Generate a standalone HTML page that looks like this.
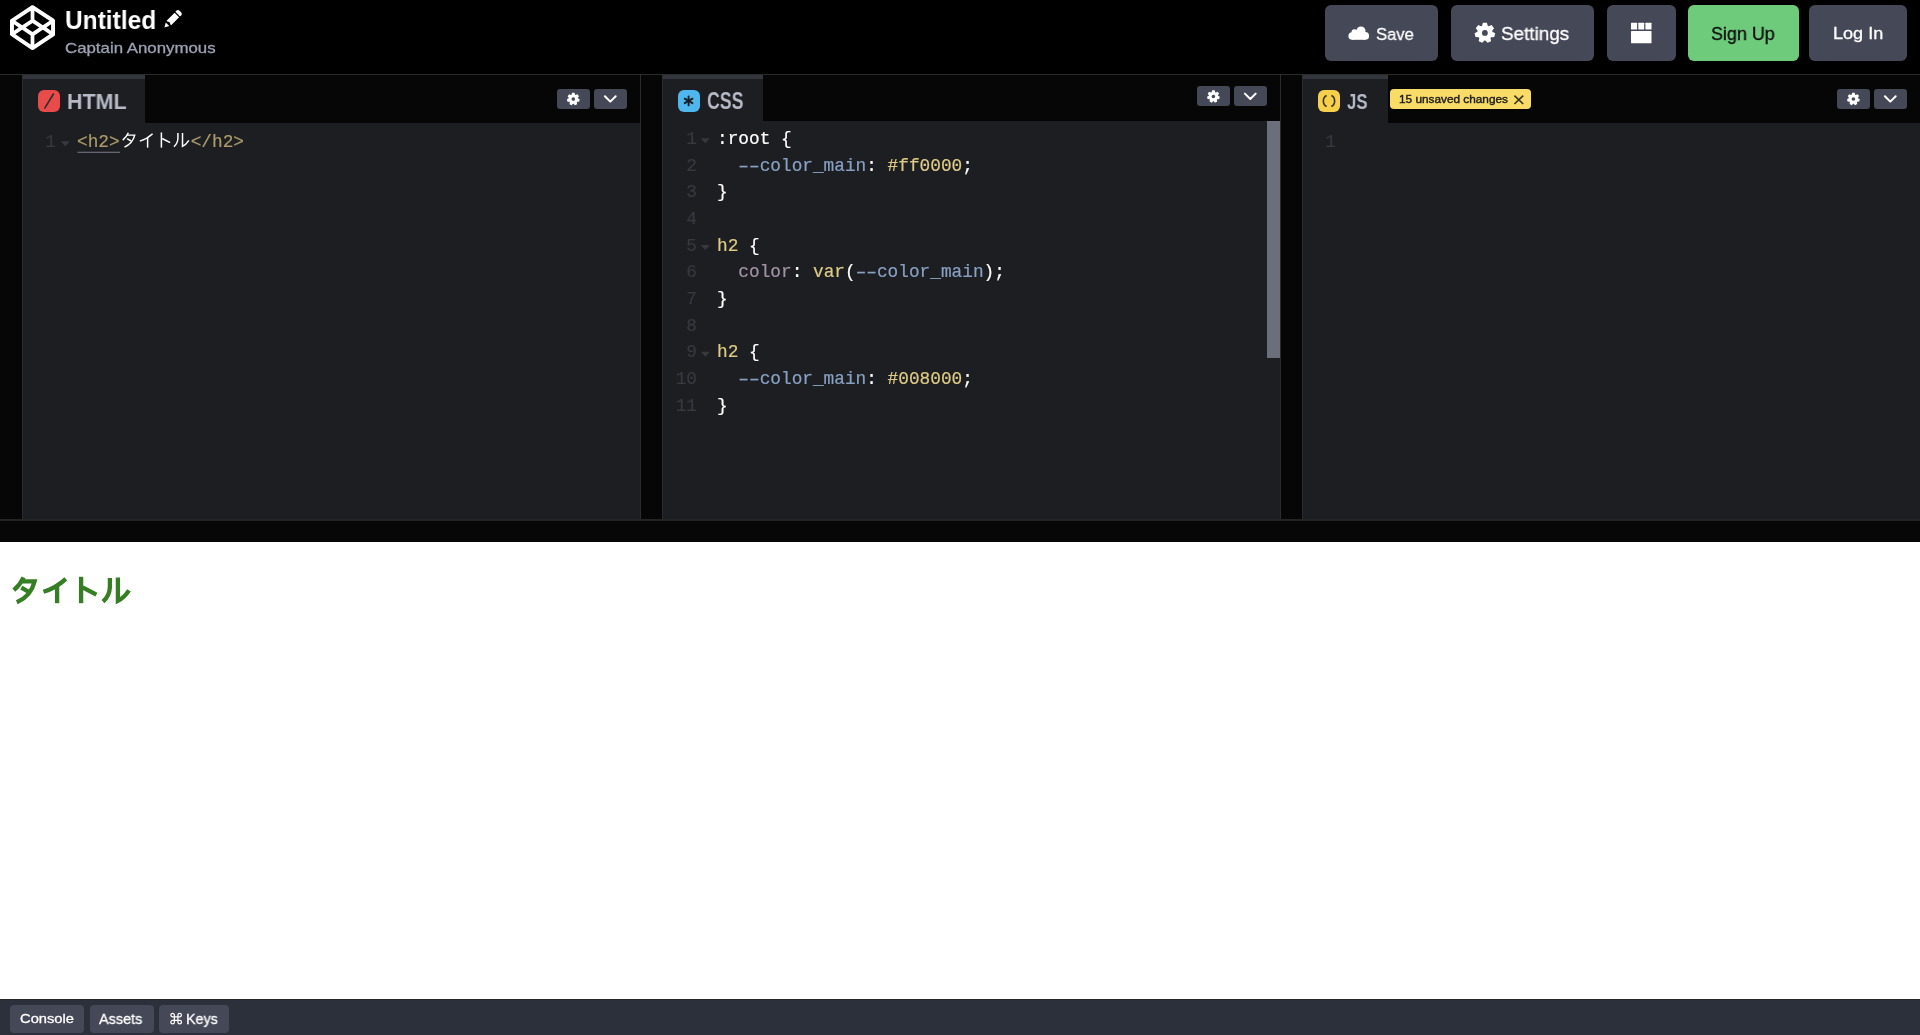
<!DOCTYPE html>
<html><head><meta charset="utf-8">
<style>
*{margin:0;padding:0;box-sizing:border-box}
html,body{width:1920px;height:1035px;overflow:hidden;background:#fff;font-family:"Liberation Sans",sans-serif}
.a{position:absolute}
.t{position:absolute;white-space:nowrap;transform-origin:0 0;will-change:transform}
#hdr{left:0;top:0;width:1920px;height:74px;background:#000}
#hdrb{left:0;top:74px;width:1920px;height:1px;background:#2a2a2a}
.btn{position:absolute;top:5px;height:56px;border-radius:6px;background:#444857}
.res{position:absolute;top:75px;height:444px;background:#060606}
.pan{position:absolute;top:75px;height:445px;background:#1d1e22;border-left:1px solid #2c2c2c;border-right:1px solid #2c2c2c;border-bottom:1px solid #2c2c2c}
.tabbar{position:absolute;left:0;top:0;right:0;height:48px;background:#060606}
.tab{position:absolute;left:0;top:0;height:48px;background:#1d1e22;border-top:4px solid #34363e}
.ico{position:absolute;top:15px;width:22px;height:22px;border-radius:6px}
.sbtn{position:absolute;height:20px;width:33px;border-radius:3px;background:#444857}
.mono{will-change:transform;-webkit-text-stroke:0.2px currentColor;font-family:"Liberation Mono",monospace;font-size:17.78px;line-height:26.67px}
.ln{position:absolute;color:#37393f;text-align:right}
.fold{position:absolute;width:0;height:0;border-left:4.5px solid transparent;border-right:4.5px solid transparent;border-top:5px solid #3b3e47}
#ftr{left:0;top:999px;width:1920px;height:36px;background:#2c303a;border-top:1px solid #26272c}
.fbtn{position:absolute;top:5px;height:28px;border-radius:4px;background:#444857}
</style></head><body>
<!-- header -->
<div id="hdr" class="a"></div>
<div id="hdrb" class="a"></div>
<svg class="a" style="left:10px;top:5px" width="45" height="45" viewBox="0 0 24 24"><path fill="#fff" d="M24 8.2l-.1-.2-.1-.1v-.1l-.1-.1v-.1l-.1-.1L12.6.3c-.4-.3-.8-.3-1.2 0L.4 7.6l-.1.1-.1.1-.1.1v.1l-.1.1V15.9l.1.1.1.1v.1l.1.1.1.1L11.4 23.9c.2.1.4.2.6.2s.4-.1.6-.2l11-7.3.1-.1.1-.1v-.1l.1-.1v-.1l.1-.1V8.2zM13 3l8.1 5.4-3.6 2.4-4.5-3V3zm-2 0v4.8l-4.5 3-3.6-2.4L11 3zM2.1 10.3L4.6 12l-2.5 1.7v-3.4zM11 21l-8.1-5.4 3.6-2.4 4.5 3V21zm1-6.6L8.4 12 12 9.6l3.6 2.4-3.6 2.4zm1 6.6v-4.8l4.5-3 3.6 2.4L13 21zm8.9-7.3L19.4 12l2.5-1.7v3.4z"/></svg>

<div class="btn" style="left:1325px;width:113px"></div>
<div class="btn" style="left:1451px;width:143px"></div>
<div class="btn" style="left:1607px;width:69px"></div>
<div class="btn" style="left:1688px;width:111px;background:#6ecb7b"></div>
<div class="btn" style="left:1809px;width:98px"></div>

<!-- editors -->
<div class="res" style="left:0;width:22px"></div>
<div class="res" style="left:641px;width:21px"></div>
<div class="res" style="left:1281px;width:21px"></div>

<div class="pan" style="left:22px;width:619px">
  <div class="tabbar"></div>
  <div class="tab" style="width:122px"></div>
  <div class="ico" style="left:15px;background:#e74c4b"></div>
  <div class="sbtn" style="left:534px;top:14px"></div>
  <div class="sbtn" style="left:571px;top:14px"></div>
</div>
<div class="pan" style="left:662px;width:619px">
  <div class="tabbar" style="height:46px"></div>
  <div class="tab" style="width:100px;height:46px"></div>
  <div class="ico" style="left:15px;background:#4fb6ee"></div>
  <div class="sbtn" style="left:534px;top:11px"></div>
  <div class="sbtn" style="left:571px;top:11px"></div>
  <div class="a" style="left:604px;top:46px;width:13px;height:237px;background:#6b6e7b"></div>
</div>
<div class="pan" style="left:1302px;width:618px;border-right:0">
  <div class="tabbar"></div>
  <div class="tab" style="width:85px"></div>
  <div class="ico" style="left:15px;background:#f6d04d"></div>
  <div class="a" style="left:87px;top:14px;width:141px;height:20px;border-radius:4px;background:#f9dc68"></div>
  <div class="sbtn" style="left:534px;top:14px"></div>
  <div class="sbtn" style="left:571px;top:14px"></div>
</div>

<div class="a" style="left:0;top:519px;width:1920px;height:2px;background:#242424"></div>
<div class="a" style="left:0;top:521px;width:1920px;height:21px;background:#070707"></div>

<!-- footer -->
<div id="ftr" class="a">
  <div class="fbtn" style="left:10px;width:74px"></div>
  <div class="fbtn" style="left:90px;width:64px"></div>
  <div class="fbtn" style="left:159px;width:70px"></div>
</div>

<!-- icons -->
<svg class="a" style="left:0;top:0;overflow:visible" width="1920" height="1035">
 <defs><path id="gear" d="M-2.83 -7.05 L-1.99 -10.11 L1.99 -10.11 L2.83 -7.05 L3.75 -6.61 L6.66 -7.86 L9.14 -4.75 L7.28 -2.19 L7.51 -1.19 L10.30 0.31 L9.41 4.19 L6.25 4.33 L5.61 5.13 L6.18 8.24 L2.59 9.97 L0.51 7.58 L-0.51 7.58 L-2.59 9.97 L-6.18 8.24 L-5.61 5.13 L-6.25 4.33 L-9.41 4.19 L-10.30 0.31 L-7.51 -1.19 L-7.28 -2.19 L-9.14 -4.75 L-6.66 -7.86 L-3.75 -6.61 Z M2.90 0.00 A2.9 2.9 0 1 0 -2.90 0.00 A2.9 2.9 0 1 0 2.90 0.00 Z" fill-rule="evenodd"/></defs>
 <!-- pencil -->
 <g transform="translate(164.4 27.4) rotate(-45)" fill="#fff">
  <polygon points="0,0 4.4,-2.5 4.4,2.5"/>
  <polygon points="6.0,-3.2 17.6,-3.2 17.6,3.2 6.0,3.2 7.4,0"/>
  <path d="M18.8 -3.3 H20.6 A1.9 3.3 0 0 1 20.6 3.3 H18.8 Z"/>
 </g>
 <!-- cloud -->
 <g fill="#fff">
  <circle cx="1360.9" cy="31.0" r="4.6"/>
  <circle cx="1354.4" cy="32.2" r="2.9"/>
  <circle cx="1352.2" cy="36.0" r="3.8"/>
  <circle cx="1365.3" cy="35.9" r="3.8"/>
  <rect x="1352.2" y="33" width="13.1" height="6.8"/>
 </g>
 <!-- header gear -->
 <use href="#gear" transform="translate(1484.9 32.9)" fill="#fff"/>
 <!-- grid -->
 <g fill="#fff">
  <rect x="1631" y="22.7" width="6.1" height="6.8" rx="0.6"/>
  <rect x="1638.3" y="22.7" width="5.9" height="6.8" rx="0.6"/>
  <rect x="1645.4" y="22.7" width="6.1" height="6.8" rx="0.6"/>
  <rect x="1631" y="31" width="20.5" height="12.3" rx="0.6"/>
 </g>
 <!-- tab icons -->
 <line x1="53.4" y1="94.0" x2="44.8" y2="108.2" stroke="#2a2a2c" stroke-width="1.5" stroke-linecap="round"/>
 <g stroke="#1a1e22" stroke-width="1.9" stroke-linecap="round">
  <line x1="688.6" y1="96.4" x2="688.6" y2="105.4"/>
  <line x1="684.7" y1="98.65" x2="692.5" y2="103.15"/>
  <line x1="684.7" y1="103.15" x2="692.5" y2="98.65"/>
 </g>
 <g stroke="#3a3222" stroke-width="1.6" fill="none" stroke-linecap="butt">
  <path d="M1326.6 95.5 A5.4 6.0 0 0 0 1326.6 106.5"/>
  <path d="M1331.4 95.5 A5.4 6.0 0 0 1 1331.4 106.5"/>
 </g>
 <!-- small gears -->
 <use href="#gear" transform="translate(573.3 99.1) scale(0.62)" fill="#fff"/>
 <use href="#gear" transform="translate(1213.4 96.5) scale(0.62)" fill="#fff"/>
 <use href="#gear" transform="translate(1853.4 99.0) scale(0.62)" fill="#fff"/>
 <!-- chevrons -->
 <g stroke="#fff" stroke-width="2" fill="none" stroke-linecap="round" stroke-linejoin="round">
  <polyline points="604.9,96.2 610.3,101.6 615.7,96.2"/>
  <polyline points="1244.9,93.6 1250.3,99.0 1255.7,93.6"/>
  <polyline points="1884.9,96.2 1890.3,101.6 1895.7,96.2"/>
 </g>
 <!-- badge x -->
 <g stroke="#3b3723" stroke-width="1.7" stroke-linecap="butt">
  <line x1="1514.4" y1="95.6" x2="1523.2" y2="104"/>
  <line x1="1523.2" y1="95.6" x2="1514.4" y2="104"/>
 </g>
 <!-- command symbol -->
 <g transform="translate(169.05 1011.55) scale(0.592)" stroke="#fff" stroke-width="2.1" fill="none" stroke-linecap="round" stroke-linejoin="round">
  <path d="M15 6v12a3 3 0 1 0 3-3H6a3 3 0 1 0 3 3V6a3 3 0 1 0-3 3h12a3 3 0 1 0-3-3"/>
 </g>
 <!-- html underline -->
 <rect x="77.5" y="151.7" width="42.5" height="1.2" fill="#6b6e79"/>
 <!-- fold triangles -->
 <g fill="#37393f">
  <polygon points="60.8,141.2 69.8,141.2 65.3,146.2"/>
  <polygon points="700.8,138.3 709.8,138.3 705.3,143.3"/>
  <polygon points="700.8,245.0 709.8,245.0 705.3,250.0"/>
  <polygon points="700.8,351.7 709.8,351.7 705.3,356.7"/>
 </g>
 <!-- katakana title -->
 <g id="kata" fill="none" stroke="#357e23" stroke-width="4.3" stroke-linejoin="miter">
  <path d="M23.6 577.3 Q20 585 13.8 590.2"/>
  <path d="M20.8 581.4 L34.6 581.4 Q31 596 16.8 602.3"/>
  <path d="M21.3 587.6 L28.4 591.6"/>
  <path d="M65.8 578.9 Q56 588 43.5 591.8"/>
  <path d="M57.1 586.2 L57.1 603.2"/>
  <path d="M81.1 576.8 L81.1 603.2"/>
  <path d="M82.5 587.3 L96.4 594.6"/>
  <path d="M109.9 577.9 L109.9 587 Q109.5 596 103 601.7"/>
  <path d="M117.9 577.6 L117.9 600.8 Q124 598 129 590.4"/>
 </g>
 <g transform="translate(114.84 -198.6) scale(0.574)" fill="none" stroke="#fff" stroke-width="2.6">
  <path d="M23.6 577.3 Q20 585 13.8 590.2"/>
  <path d="M20.8 581.4 L34.6 581.4 Q31 596 16.8 602.3"/>
  <path d="M21.3 587.6 L28.4 591.6"/>
  <path d="M65.8 578.9 Q56 588 43.5 591.8"/>
  <path d="M57.1 586.2 L57.1 603.2"/>
  <path d="M81.1 576.8 L81.1 603.2"/>
  <path d="M82.5 587.3 L96.4 594.6"/>
  <path d="M109.9 577.9 L109.9 587 Q109.5 596 103 601.7"/>
  <path d="M117.9 577.6 L117.9 600.8 Q124 598 129 590.4"/>
 </g>
</svg>
<!-- code -->
<div class="mono a ln" style="left:15.9px;top:128.9px;width:40px">1</div>
<div class="mono a" style="left:77.3px;top:128.9px;white-space:pre;color:#ad9b6a">&lt;h2&gt;<span style="display:inline-block;width:71px"></span>&lt;/h2&gt;</div>
<div class="mono a ln" style="left:656.5px;top:126px;width:40px">1<br>2<br>3<br>4<br>5<br>6<br>7<br>8<br>9<br>10<br>11</div>
<div class="mono a" style="left:717.3px;top:126px;white-space:pre;color:#fff"><span>:root {</span>
  <span style="color:#88a1c2">&#8211;&#8211;color_main</span>: <span style="color:#ddcb85">#ff0000</span>;
}

<span style="color:#ddcb85">h2</span> {
  <span style="color:#a393a8">color</span>: <span style="color:#ddcb85">var</span>(<span style="color:#88a1c2">&#8211;&#8211;color_main</span>);
}

<span style="color:#ddcb85">h2</span> {
  <span style="color:#88a1c2">&#8211;&#8211;color_main</span>: <span style="color:#ddcb85">#008000</span>;
}</div>
<div class="mono a ln" style="left:1295.7px;top:128.9px;width:40px">1</div>
<div class="t" id="untitled" style="left:65.06px;top:7.00px;font-size:26.00px;line-height:26.00px;font-weight:bold;color:#fff;transform:scaleX(0.9417);-webkit-text-stroke:0px #fff">Untitled</div>
<div class="t" id="captain" style="left:65.00px;top:41.04px;font-size:14.13px;line-height:14.13px;font-weight:normal;color:#9da0b2;transform:scaleX(1.1912);-webkit-text-stroke:0.3px #9da0b2">Captain Anonymous</div>
<div class="t" id="save" style="left:1375.53px;top:25.83px;font-size:17.20px;line-height:17.20px;font-weight:normal;color:#fff;transform:scaleX(0.9670);-webkit-text-stroke:0.3px #fff">Save</div>
<div class="t" id="settings" style="left:1501.06px;top:24.44px;font-size:19.23px;line-height:19.23px;font-weight:normal;color:#fff;transform:scaleX(0.9816);-webkit-text-stroke:0.3px #fff">Settings</div>
<div class="t" id="signup" style="left:1711.34px;top:23.75px;font-size:19.19px;line-height:19.19px;font-weight:normal;color:#0d0d0d;transform:scaleX(0.9347);-webkit-text-stroke:0.3px #0d0d0d">Sign Up</div>
<div class="t" id="login" style="left:1833.09px;top:25.74px;font-size:16.86px;line-height:16.86px;font-weight:normal;color:#fff;transform:scaleX(1.0712);-webkit-text-stroke:0.3px #fff">Log In</div>
<div class="t" id="html" style="left:66.67px;top:90.87px;font-size:21.81px;line-height:21.81px;font-weight:bold;color:#b6b9c6;transform:scaleX(0.9849);-webkit-text-stroke:0px #b6b9c6">HTML</div>
<div class="t" id="css" style="left:707.20px;top:90.15px;font-size:23.52px;line-height:23.52px;font-weight:bold;color:#b6b9c6;transform:scaleX(0.7531);-webkit-text-stroke:0px #b6b9c6">CSS</div>
<div class="t" id="js" style="left:1347.00px;top:91.21px;font-size:22.50px;line-height:22.50px;font-weight:bold;color:#b6b9c6;transform:scaleX(0.7480);-webkit-text-stroke:0px #b6b9c6">JS</div>
<div class="t" id="badge" style="left:1399.00px;top:93.78px;font-size:10.88px;line-height:10.88px;font-weight:normal;color:#1e1e1e;transform:scaleX(1.0854);-webkit-text-stroke:0.4px #1e1e1e">15 unsaved changes</div>
<div class="t" id="console" style="left:20.00px;top:1011.95px;font-size:13.42px;line-height:13.42px;font-weight:normal;color:#fff;transform:scaleX(1.0976);-webkit-text-stroke:0.3px #fff">Console</div>
<div class="t" id="assets" style="left:99.25px;top:1011.05px;font-size:14.99px;line-height:14.99px;font-weight:normal;color:#fff;transform:scaleX(0.9620);-webkit-text-stroke:0.3px #fff">Assets</div>
<div class="t" id="keys" style="left:186.29px;top:1011.81px;font-size:14.65px;line-height:14.65px;font-weight:normal;color:#fff;transform:scaleX(0.9766);-webkit-text-stroke:0.3px #fff">Keys</div>
</body></html>
